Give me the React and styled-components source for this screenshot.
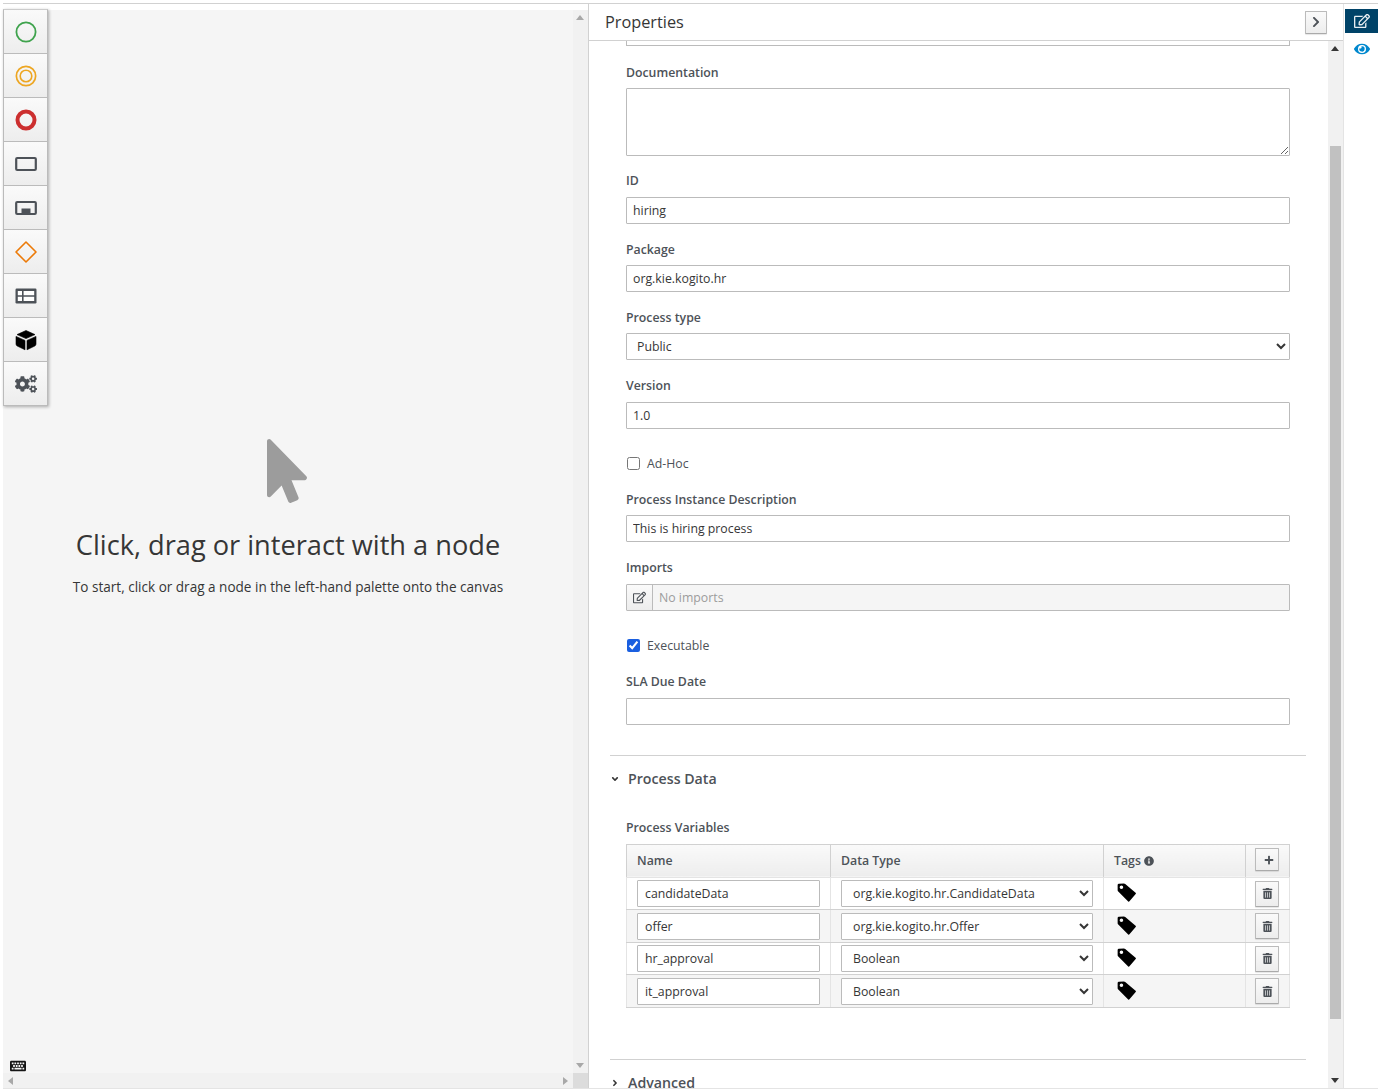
import styled, { createGlobalStyle } from "styled-components";
import {
  FaAngleDown,
  FaAngleRight,
  FaChevronRight,
  FaCogs,
  FaEye,
  FaInfoCircle,
  FaKeyboard,
  FaMousePointer,
  FaPlus,
  FaRegEdit,
  FaTrashAlt,
} from "react-icons/fa";

const GlobalStyle = createGlobalStyle`
  html, body {
    margin: 0;
    height: 1091px;
    overflow: hidden;
    background: #fff;
    font-family: "Open Sans", "Liberation Sans", sans-serif;
    color: #363636;
  }
  * { box-sizing: border-box; }
`;

const Page = styled.div`
  height: 1091px;
  padding: 3px 0 2px 3px;
  display: flex;
  flex-direction: column;
`;

const Frame = styled.div`
  flex: 1;
  min-height: 0;
  display: flex;
  border-top: 1px solid #d1d1d1;
  border-bottom: 1px solid #e4e4e4;
`;

/* left canvas */
const Canvas = styled.section`
  position: relative;
  width: 585px;
  flex: none;
  margin-top: 6px;
  display: grid;
  grid-template-columns: 1fr 15px;
  grid-template-rows: 1fr 15px;
  background: #f5f5f5;
`;

const CanvasBody = styled.div`
  display: flex;
  flex-direction: column;
  align-items: center;
  padding-top: 429px;
`;

const Pointer = styled(FaMousePointer)`
  width: 64px;
  height: 64px;
  margin-right: 2px;
  color: #9c9c9c;
`;

const EmptyTitle = styled.h2`
  margin: 24px 0 0;
  font-size: 27.2px;
  line-height: 36px;
  font-weight: 400;
  color: #363636;
`;

const EmptyText = styled.p`
  margin: 14px 0 0;
  font-size: 13.55px;
  line-height: 20px;
  color: #363636;
`;

const Palette = styled.div`
  position: absolute;
  top: -1px;
  left: 0;
  width: 45px;
  display: flex;
  flex-direction: column;
  border: 1px solid #bbb;
  border-top-color: #ccc;
  box-shadow: 1px 1px 3px rgba(0, 0, 0, 0.3);
`;

const PaletteItem = styled.div`
  height: 44px;
  display: flex;
  align-items: center;
  justify-content: center;
  background: linear-gradient(#fafafa, #ededed);
  border-bottom: 1px solid #bbb;
  &:last-child {
    height: 43px;
    border-bottom: 0;
  }
  svg {
    width: 22px;
    height: 22px;
  }
`;

const KeyboardHint = styled(FaKeyboard)`
  position: absolute;
  left: 7px;
  bottom: 14px;
  width: 16px;
  height: 16px;
  color: #151515;
`;

const Track = styled.div`
  background: #f1f1f1;
  display: flex;
  flex-direction: ${(p) => (p.$horizontal ? "row" : "column")};
  justify-content: space-between;
  align-items: center;
  padding: ${(p) => (p.$horizontal ? "0 5px" : "5px 1px 5px 0")};
`;

const Arrow = styled.i`
  width: 0;
  height: 0;
  flex: none;
  border-style: solid;
  border-color: transparent;
  ${(p) => p.$dir === "up" && `border-width: 0 4px 5px; border-bottom-color: ${p.$color};`}
  ${(p) => p.$dir === "down" && `border-width: 5px 4px 0; border-top-color: ${p.$color};`}
  ${(p) => p.$dir === "left" && `border-width: 4px 5px 4px 0; border-right-color: ${p.$color};`}
  ${(p) => p.$dir === "right" && `border-width: 4px 0 4px 5px; border-left-color: ${p.$color};`}
`;

const Corner = styled.div`
  background: #dcdcdc;
`;

/* properties panel */
const Panel = styled.section`
  width: 756px;
  flex: none;
  display: flex;
  flex-direction: column;
  border-left: 1px solid #d1d1d1;
  border-right: 1px solid #e4e4e4;
  min-height: 0;
`;

const PanelHeader = styled.header`
  height: 37px;
  flex: none;
  display: flex;
  align-items: center;
  justify-content: space-between;
  padding: 0 16px;
  border-bottom: 1px solid #d1d1d1;
`;

const PanelTitle = styled.h3`
  margin: 0;
  font-size: 16.3px;
  font-weight: 400;
  color: #363636;
`;

const Button = styled.button`
  width: ${(p) => p.$size || 24}px;
  height: ${(p) => p.$height || 24}px;
  padding: 0;
  display: inline-flex;
  align-items: center;
  justify-content: center;
  background: linear-gradient(#fafafa, #ededed);
  border: 1px solid #bbb;
  border-bottom-color: #aaa;
  border-radius: 1px;
  color: #4d5258;
  box-shadow: 0 1px 1px rgba(0, 0, 0, 0.1);
  svg {
    width: ${(p) => p.$icon || 11}px;
    height: ${(p) => p.$icon || 11}px;
  }
`;

const PanelBody = styled.div`
  flex: 1;
  min-height: 0;
  display: flex;
`;

const Form = styled.div`
  flex: 1;
  min-width: 0;
  overflow: hidden;
  padding: 0 22px 0 21px;
`;

const Scrollbar = styled.div`
  width: 15px;
  flex: none;
  background: #f1f1f1;
  display: flex;
  flex-direction: column;
  align-items: center;
  padding: 5px 1px 5px 0;
`;

const Thumb = styled.div`
  width: 11px;
  height: 873px;
  margin: 95px 0 auto;
  background: #c1c1c1;
`;

const Inset = styled.div`
  padding: 0 16px;
`;

const ClippedInput = styled.div`
  height: 5px;
  margin-bottom: 16.5px;
  border: 1px solid #bbb;
  border-top: 0;
`;

const Field = styled.div`
  margin-bottom: 15.8px;
`;

const Label = styled.label`
  display: block;
  height: 20px;
  margin-bottom: 5.5px;
  font-size: 12.3px;
  line-height: 20px;
  font-weight: 600;
  color: #4d5258;
`;

const TextInput = styled.input`
  display: block;
  width: 100%;
  height: 27px;
  padding: 0 ${(p) => p.$pad || 6}px;
  border: 1px solid #bbb;
  border-radius: 1px;
  background: #fff;
  font: 12.3px "Open Sans", sans-serif;
  color: #363636;
  outline: none;
`;

const TextArea = styled.textarea`
  display: block;
  width: 100%;
  height: 67.5px;
  border: 1px solid #bbb;
  border-radius: 1px;
  background: #fff;
  resize: vertical;
  outline: none;
`;

const Select = styled.select`
  display: block;
  width: 100%;
  height: 27px;
  padding: 0 ${(p) => p.$pad || 6}px;
  border: 1px solid #bbb;
  border-radius: 1px;
  background: #fff;
  font: 12.3px "Open Sans", sans-serif;
  color: #363636;
  outline: none;
`;

const CheckRow = styled.label`
  display: flex;
  align-items: center;
  gap: 7px;
  height: 20px;
  margin: 25px 0 16.3px;
  font-size: 12.3px;
  color: #4d5258;
  input {
    width: 13px;
    height: 13px;
    margin: 0 0 0 1px;
    accent-color: #1a5fe0;
  }
`;

const InputGroup = styled.div`
  display: flex;
  height: 27px;
  border: 1px solid #bbb;
  border-radius: 1px;
  background: #f5f5f5;
`;

const GroupAddon = styled.span`
  width: 26px;
  flex: none;
  display: flex;
  align-items: center;
  justify-content: center;
  border-right: 1px solid #bbb;
  background: linear-gradient(#fafafa, #ededed);
  color: #4d5258;
  svg {
    width: 13px;
    height: 13px;
  }
`;

const GroupValue = styled.span`
  flex: 1;
  padding-left: 6px;
  font-size: 12.3px;
  line-height: 25px;
  color: #9c9c9c;
`;

const Section = styled.div`
  margin-top: ${(p) => p.$top}px;
  border-top: 1px solid #d1d1d1;
  padding-top: 13px;
`;

const SectionTitle = styled.h4`
  margin: 0;
  display: flex;
  align-items: center;
  gap: 8px;
  height: 20px;
  font-size: 14.2px;
  font-weight: 600;
  color: #4d5258;
  svg {
    width: 10px;
    height: 10px;
    color: #363636;
  }
`;

const VarLabel = styled(Label)`
  margin-top: 29.5px;
`;

const VarTable = styled.table`
  width: 100%;
  border-collapse: collapse;
  table-layout: fixed;
  border: 1px solid #d1d1d1;
`;

const HeadCell = styled.th`
  width: ${(p) => p.$width}px;
  height: 33px;
  padding: 0 10px;
  text-align: left;
  font-size: 12.3px;
  font-weight: 600;
  color: #4d5258;
  background: linear-gradient(#fafafa, #ededed);
  border: 1px solid #d1d1d1;
  border-bottom-color: #e4e4e4;
  svg {
    width: 10px;
    height: 10px;
    margin-left: 3px;
    vertical-align: -1px;
  }
`;

const ActionHead = styled(HeadCell)`
  padding: 0 0 2px 9px;
`;

const Row = styled.tr`
  background: ${(p) => (p.$striped ? "#f5f5f5" : "#fff")};
`;

const Cell = styled.td`
  height: 32.5px;
  padding: 0 10px;
  border: 1px solid #d1d1d1;
  border-color: #d1d1d1 #e4e4e4;
`;

const ActionCell = styled(Cell)`
  padding: 0 0 0 9px;
`;

const TagGlyph = styled.svg`
  display: block;
  width: 19px;
  height: 19px;
  margin: -2px 0 0 3px;
`;

const Rail = styled.aside`
  flex: 1;
  padding-top: 5px;
  display: flex;
  flex-direction: column;
  align-items: stretch;
`;

const RailTab = styled.div`
  height: 24px;
  margin: 0 0 4px 1px;
  display: flex;
  align-items: center;
  justify-content: center;
  background: ${(p) => (p.$active ? "#004368" : "transparent")};
  color: ${(p) => (p.$active ? "#e8eef2" : "#0088ce")};
  svg {
    width: 16px;
    height: 16px;
  }
`;

const CircleIcon = ({ color, width, inner }) => (
  <svg viewBox="0 0 22 22">
    <circle cx="11" cy="11" r={10 - width / 2 + 0.5} fill="none" stroke={color} strokeWidth={width} />
    {inner && <circle cx="11" cy="11" r="5.8" fill="none" stroke={color} strokeWidth="1.6" />}
  </svg>
);

const TaskIcon = () => (
  <svg viewBox="0 0 22 22">
    <rect x="1.2" y="5" width="19.6" height="12" rx="1" fill="none" stroke="#4d5258" strokeWidth="2.2" />
  </svg>
);

const SubProcessIcon = () => (
  <svg viewBox="0 0 22 22">
    <rect x="1.2" y="5" width="19.6" height="12" rx="1" fill="none" stroke="#4d5258" strokeWidth="2.2" />
    <rect x="6.5" y="11.5" width="9" height="5.5" fill="#4d5258" />
  </svg>
);

const GatewayIcon = () => (
  <svg viewBox="0 0 22 22">
    <path d="M11 1 L21 11 L11 21 L1 11 Z" fill="none" stroke="#ec7a08" strokeWidth="1.6" strokeLinejoin="round" />
  </svg>
);

const LaneIcon = () => (
  <svg viewBox="0 0 22 22">
    <rect x="0.5" y="3.5" width="21" height="15" rx="1.2" fill="#4d5258" />
    <path d="M2.8 6h4.2v4.2H2.8zM2.8 11.8h4.2V16H2.8zM8.6 6h10.6v4.2H8.6zM8.6 11.8h10.6V16H8.6z" fill="#fff" />
  </svg>
);

const CubeIcon = () => (
  <svg viewBox="0 0 22 22">
    <path
      d="M11 1.5 L20 5.6 L11 9.6 L2 5.6 Z M1 7.4 L10 11.4 L10 20.8 L2.2 17 Q1 16.4 1 15 Z M21 7.4 L12 11.4 L12 20.8 L19.8 17 Q21 16.4 21 15 Z"
      fill="#000"
      stroke="#000"
      strokeWidth="0.6"
      strokeLinejoin="round"
    />
  </svg>
);

const TagIcon = () => (
  <TagGlyph viewBox="0 0 18 18">
    <path
      fillRule="evenodd"
      d="M1.8 0.6 L6.6 0.4 Q7.2 0.4 7.8 0.9 L17.6 9.2 Q18.2 9.8 17.7 10.4 L11.8 17.4 Q11.2 18 10.6 17.5 L1.2 8 Q0.6 7.4 0.6 6.8 L0.6 1.8 Q0.6 0.7 1.8 0.6 Z M4.2 2.3 A1.7 1.7 0 1 0 4.2 5.7 A1.7 1.7 0 1 0 4.2 2.3 Z"
      fill="#000"
    />
  </TagGlyph>
);

const variables = [
  { name: "candidateData", type: "org.kie.kogito.hr.CandidateData" },
  { name: "offer", type: "org.kie.kogito.hr.Offer" },
  { name: "hr_approval", type: "Boolean" },
  { name: "it_approval", type: "Boolean" },
];

function App() {
  return (
    <Page>
      <GlobalStyle />
      <Frame>
        <Canvas>
          <CanvasBody>
            <Pointer />
            <EmptyTitle>Click, drag or interact with a node</EmptyTitle>
            <EmptyText>To start, click or drag a node in the left-hand palette onto the canvas</EmptyText>
          </CanvasBody>
          <Track>
            <Arrow $dir="up" $color="#a8a8a8" />
            <Arrow $dir="down" $color="#a8a8a8" />
          </Track>
          <Track $horizontal>
            <Arrow $dir="left" $color="#a8a8a8" />
            <Arrow $dir="right" $color="#a8a8a8" />
          </Track>
          <Corner />
          <Palette>
            <PaletteItem><CircleIcon color="#3fa34d" width={1.8} /></PaletteItem>
            <PaletteItem><CircleIcon color="#eda622" width={1.7} inner /></PaletteItem>
            <PaletteItem><CircleIcon color="#cc2f2f" width={4} /></PaletteItem>
            <PaletteItem><TaskIcon /></PaletteItem>
            <PaletteItem><SubProcessIcon /></PaletteItem>
            <PaletteItem><GatewayIcon /></PaletteItem>
            <PaletteItem><LaneIcon /></PaletteItem>
            <PaletteItem><CubeIcon /></PaletteItem>
            <PaletteItem><FaCogs color="#4d5258" /></PaletteItem>
          </Palette>
          <KeyboardHint />
        </Canvas>

        <Panel>
          <PanelHeader>
            <PanelTitle>Properties</PanelTitle>
            <Button $size={22} $height={23} $icon={12}><FaChevronRight /></Button>
          </PanelHeader>
          <PanelBody>
            <Form>
              <Inset>
                <ClippedInput />
                <Field>
                  <Label>Documentation</Label>
                  <TextArea />
                </Field>
                <Field>
                  <Label>ID</Label>
                  <TextInput defaultValue="hiring" />
                </Field>
                <Field>
                  <Label>Package</Label>
                  <TextInput defaultValue="org.kie.kogito.hr" />
                </Field>
                <Field>
                  <Label>Process type</Label>
                  <Select defaultValue="Public">
                    <option>Public</option>
                  </Select>
                </Field>
                <Field>
                  <Label>Version</Label>
                  <TextInput defaultValue="1.0" />
                </Field>
                <CheckRow>
                  <input type="checkbox" />
                  Ad-Hoc
                </CheckRow>
                <Field>
                  <Label>Process Instance Description</Label>
                  <TextInput defaultValue="This is hiring process" />
                </Field>
                <Field>
                  <Label>Imports</Label>
                  <InputGroup>
                    <GroupAddon><FaRegEdit /></GroupAddon>
                    <GroupValue>No imports</GroupValue>
                  </InputGroup>
                </Field>
                <CheckRow>
                  <input type="checkbox" defaultChecked />
                  Executable
                </CheckRow>
                <Label>SLA Due Date</Label>
                <TextInput />
              </Inset>

              <Section $top={30.4}>
                <SectionTitle><FaAngleDown /> Process Data</SectionTitle>
                <Inset>
                  <VarLabel>Process Variables</VarLabel>
                  <VarTable>
                    <thead>
                      <tr>
                        <HeadCell $width={204}>Name</HeadCell>
                        <HeadCell $width={273}>Data Type</HeadCell>
                        <HeadCell $width={142}>Tags<FaInfoCircle /></HeadCell>
                        <ActionHead>
                          <Button $height={23} $icon={12}><FaPlus /></Button>
                        </ActionHead>
                      </tr>
                    </thead>
                    <tbody>
                      {variables.map((v, i) => (
                        <Row key={v.name} $striped={i % 2 === 1}>
                          <Cell><TextInput $pad={7} defaultValue={v.name} /></Cell>
                          <Cell>
                            <Select $pad={7} defaultValue={v.type}>
                              <option>{v.type}</option>
                            </Select>
                          </Cell>
                          <Cell><TagIcon /></Cell>
                          <ActionCell>
                            <Button $height={26}><FaTrashAlt /></Button>
                          </ActionCell>
                        </Row>
                      ))}
                    </tbody>
                  </VarTable>
                </Inset>
              </Section>

              <Section $top={51}>
                <SectionTitle><FaAngleRight /> Advanced</SectionTitle>
              </Section>
            </Form>
            <Scrollbar>
              <Arrow $dir="up" $color="#363636" />
              <Thumb />
              <Arrow $dir="down" $color="#363636" />
            </Scrollbar>
          </PanelBody>
        </Panel>

        <Rail>
          <RailTab $active><FaRegEdit /></RailTab>
          <RailTab><FaEye /></RailTab>
        </Rail>
      </Frame>
    </Page>
  );
}

export default App;
